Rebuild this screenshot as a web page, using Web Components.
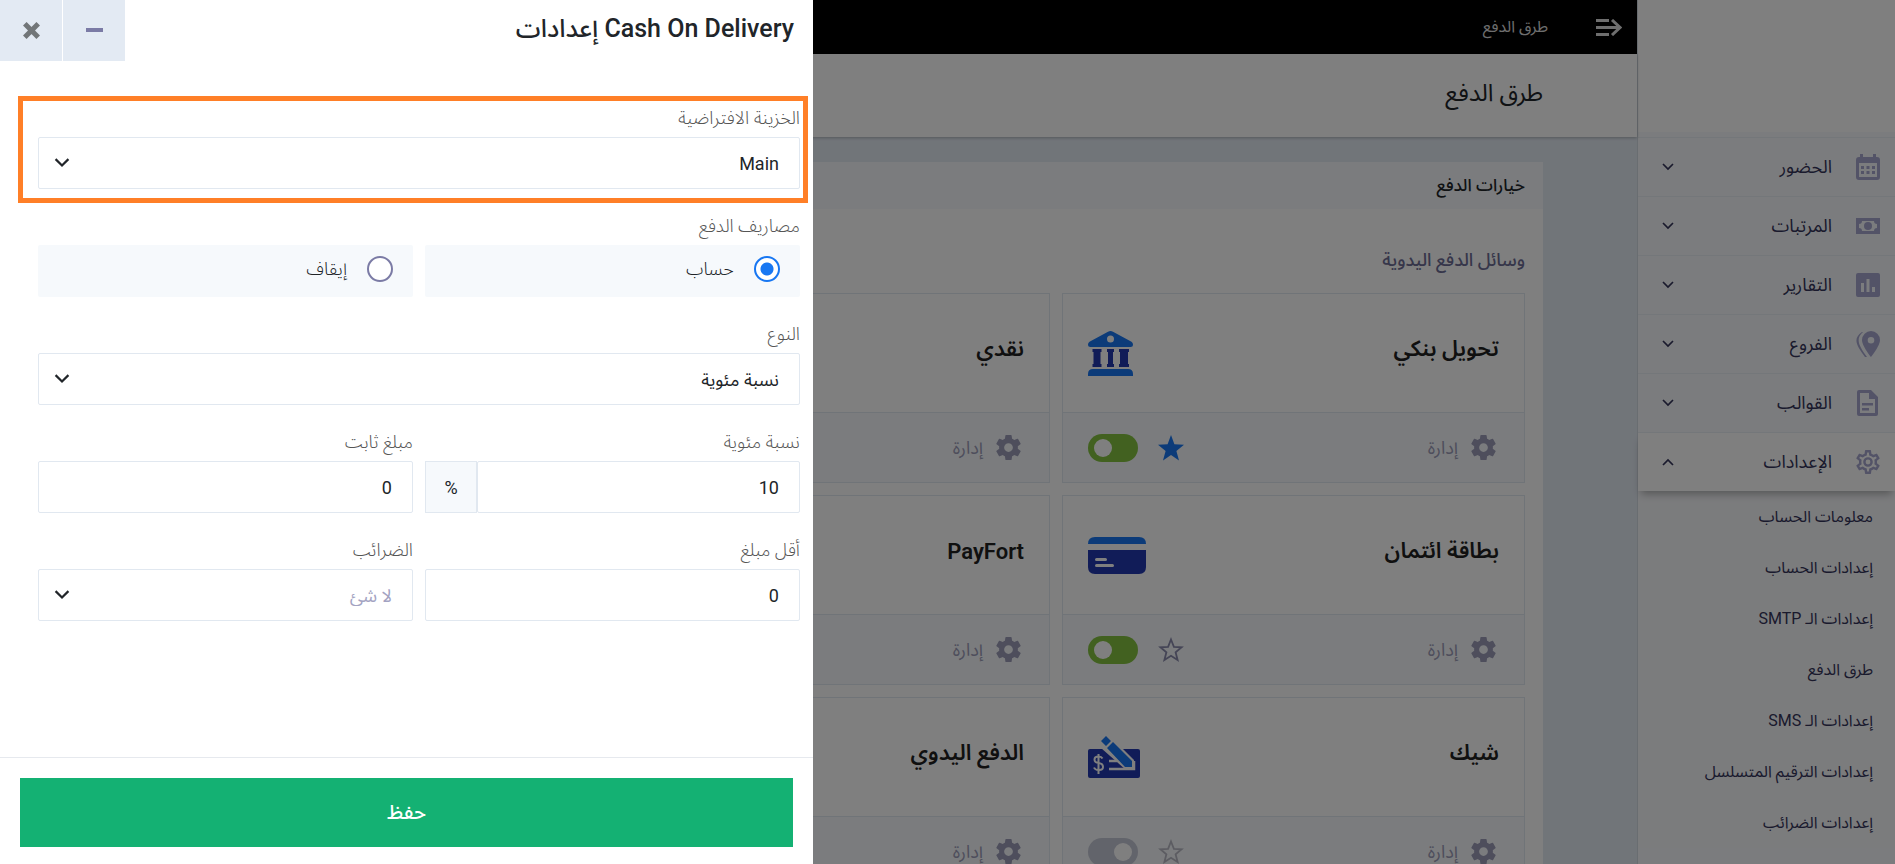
<!DOCTYPE html>
<html lang="ar" dir="rtl">
<head>
<meta charset="utf-8">
<meta name="viewport" content="width=device-width, initial-scale=1">
<title>طرق الدفع</title>
<style>
  html, body { margin: 0; height: 100%; }
  body {
    overflow: hidden;
    font-family: Roboto, "Noto Sans Arabic", "Noto Sans", "DejaVu Sans", sans-serif;
    font-size: 16px;
    color: #212529;
    background: #e3eaf3;
  }
</style>
</head>
<body>
<payment-app></payment-app>

<script>
const ICONS = {
  calendar: ['0 0 24 26', '<path fill-rule="evenodd" d="M4 0h3v3h10V0h3v3h1a3 3 0 0 1 3 3v17a3 3 0 0 1-3 3H3a3 3 0 0 1-3-3V6a3 3 0 0 1 3-3h1zM3 9v14h18V9zM5 12h3v3H5zm5.500 0h3v3h-3zm5.500 0h3v3h-3zM5 17h3v3H5zm5.500 0h3v3h-3zm5.500 0h3v3h-3z"/>'],
  money: ['0 0 24 24', '<path fill-rule="evenodd" d="M0 4h24v16H0zM6 7a3 3 0 0 1-3 3v4a3 3 0 0 1 3 3h12a3 3 0 0 1 3-3v-4a3 3 0 0 1-3-3z"/><circle cx="12" cy="12" r="4"/>'],
  chart: ['0 0 24 24', '<path fill-rule="evenodd" d="M2 0h20a2 2 0 0 1 2 2v20a2 2 0 0 1-2 2H2a2 2 0 0 1-2-2V2a2 2 0 0 1 2-2zM5 10v9h3v-9zm5.500-4v13h3V6zM16 14v5h3v-5z"/>'],
  pin: ['0 0 24 26', '<path fill-rule="evenodd" d="M15 0a9 9 0 0 1 9 9c0 6-9 17-9 17S6 15 6 9a9 9 0 0 1 9-9zm0 6a3.300 3.300 0 1 0 0 6.600A3.300 3.300 0 0 0 15 6z"/><path d="M6 1C-4 8 1 15 9 26h2C3 15-1 8 7 1z"/>'],
  doc: ['0 0 24 26', '<path fill-rule="evenodd" d="M3 0h12l7 7v17a2 2 0 0 1-2 2H3a2 2 0 0 1-2-2V2a2 2 0 0 1 2-2zm1 3v20h15V9h-6V3z"/><path d="M6 13h11v2.500H6zM6 18h7v2.500H6z"/>'],
  cog: ['2 2 20 20', '<path fill-rule="evenodd" d="M19.430 12.980c.04-.32.07-.64.07-.98s-.03-.66-.07-.98l2.110-1.650a.5.5 0 0 0 .12-.64l-2-3.460a.5.5 0 0 0-.61-.22l-2.490 1a7.300 7.300 0 0 0-1.690-.98l-.38-2.650A.5.5 0 0 0 14 2h-4a.5.5 0 0 0-.49.42l-.38 2.650c-.61.25-1.170.59-1.690.98l-2.490-1a.5.5 0 0 0-.61.22l-2 3.460a.5.5 0 0 0 .12.64l2.110 1.650c-.04.32-.07.65-.07.98s.03.66.07.98l-2.110 1.650a.5.5 0 0 0-.12.64l2 3.460c.12.22.39.3.61.22l2.490-1c.52.4 1.080.73 1.690.98l.38 2.650c.03.24.24.42.49.42h4c.25 0 .46-.18.49-.42l.38-2.650c.61-.25 1.170-.59 1.690-.98l2.490 1c.23.09.49 0 .61-.22l2-3.460a.5.5 0 0 0-.12-.64z M12 8.500a3.500 3.500 0 1 0 0 7a3.500 3.500 0 0 0 0-7z"/>'],
  cogOutline: ['2 2 20 20', '<path fill-rule="evenodd" d="M19.430 12.980c.04-.32.07-.64.07-.98s-.03-.66-.07-.98l2.110-1.650a.5.5 0 0 0 .12-.64l-2-3.460a.5.5 0 0 0-.61-.22l-2.490 1a7.300 7.300 0 0 0-1.690-.98l-.38-2.650A.5.5 0 0 0 14 2h-4a.5.5 0 0 0-.49.42l-.38 2.650c-.61.25-1.170.59-1.690.98l-2.490-1a.5.5 0 0 0-.61.22l-2 3.460a.5.5 0 0 0 .12.64l2.110 1.650c-.04.32-.07.65-.07.98s.03.66.07.98l-2.110 1.650a.5.5 0 0 0-.12.64l2 3.460c.12.22.39.3.61.22l2.490-1c.52.4 1.080.73 1.690.98l.38 2.650c.03.24.24.42.49.42h4c.25 0 .46-.18.49-.42l.38-2.650c.61-.25 1.170-.59 1.690-.98l2.490 1c.23.09.49 0 .61-.22l2-3.460a.5.5 0 0 0-.12-.64zM17.450 11.270c.04.31.05.52.05.73s-.02.43-.05.73l-.14 1.130.89.7 1.080.84-.7 1.210-1.270-.51-1.040-.42-.9.68c-.43.32-.84.56-1.250.73l-1.060.43-.16 1.130-.2 1.350h-1.400l-.35-2.480-1.060-.43c-.43-.18-.83-.41-1.230-.71l-.91-.7-1.060.43-1.270.51-.7-1.210 1.970-1.540-.14-1.130c-.03-.31-.05-.54-.05-.74s.02-.43.05-.73l.14-1.130-1.970-1.540.7-1.210 2.310.94.9-.68c.43-.32.84-.56 1.250-.73l1.060-.43.36-2.480h1.390l.35 2.480 1.060.43c.43.18.83.41 1.230.71l.91.7 2.330-.94.7 1.210-1.960 1.540z"/><circle cx="12" cy="12" r="3" fill="none" stroke="currentColor" stroke-width="2"/>'],
  menu: ['0 0 26 17', '<path d="M0 0h13v3H0zM0 7h22v3H0zM0 14h13v3H0z"/><path d="M16 1l8 7.500-8 7.500" fill="none" stroke="currentColor" stroke-width="3"/>'],
  down: ['0 0 14 14', '<path d="M2 4l5 5 5-5" fill="none" stroke="currentColor" stroke-width="1.700"/>'],
  up: ['0 0 14 14', '<path d="M2 10l5-5 5 5" fill="none" stroke="currentColor" stroke-width="1.700"/>'],
  star: ['0 0 26 26', '<path d="M13 0l3.400 9.300 9.600.4-7.600 6.200 2.600 9.600-8-5.500-8 5.500 2.600-9.600L0 9.700l9.600-.4z"/>'],
  starOutline: ['0 0 26 26', '<path d="M13 2.500l2.900 7.300 7.700.5-6 5 2 7.700-6.600-4.300L6.400 23l2-7.700-6-5 7.700-.5z" fill="none" stroke="currentColor" stroke-width="1.800"/>'],
  close: ['0 0 17 17', '<path d="M2.500 2.500l12 12M14.500 2.500l-12 12" fill="none" stroke="currentColor" stroke-width="4.500"/>'],
  minus: ['0 0 17 17', '<path d="M0 6h17v4H0z"/>'],
  bank: ['0 0 45 45', '<path fill="#1877f2" fill-rule="evenodd" d="M20 .8q2.500-1.500 5 0l18.500 10q1.500 1 1.500 2.700a2.500 2.500 0 0 1-2.500 2.500h-40A2.500 2.500 0 0 1 0 13.500q0-1.700 1.500-2.700zM22.500 4.500a3.500 3.500 0 1 0 0 7a3.500 3.500 0 0 0 0-7zM0 45v-2q0-5 5-5h35q5 0 5 5v2z"/><path fill="#2238b0" d="M4.500 18h9v3h-1v12h1v3h-9v-3h1V21h-1zM19 18h7v3h-1v12h1v3h-7v-3h1V21h-1zM31 18h10v3h-1v12h1v3H31v-3h1V21h-1z"/>'],
  card: ['0 0 58 37', '<path fill="#1877f2" d="M0 7q0-7 7-7h44q7 0 7 7z"/><path fill="#2238b0" d="M0 13h58v17q0 7-7 7H7q-7 0-7-7z"/><path stroke="#fff" stroke-width="3" stroke-linecap="round" d="M8.500 22.500h9M8.500 28.500h16"/>'],
  cheque: ['0 0 52 42', '<rect y="13" width="52" height="29" rx="2" fill="#2238b0"/><path d="M21 25h8M21 33h25v-8" fill="none" stroke="#fff" stroke-width="2.500"/><path d="M18 7l-5 5 25 22h8V24L26 4z" fill="#fff"/><path d="M18 0l5 5-5 5-5-5zM25 6l19 19v6h-7L19 12z" fill="#1877f2"/><path d="M14.500 22.500q-1-2-4-2-4 0-4 3t4 3.500q4.500.6 4.500 4t-4.500 3q-3.500 0-4.500-2.500M10.500 18v20" fill="none" stroke="#fff" stroke-width="2"/>'],
};

const icon = (name, w, h = w) => {
  const [box, body] = ICONS[name];
  return `<svg viewBox="${box}" width="${w}" height="${h}" fill="currentColor" aria-hidden="true">${body}</svg>`;
};

const BASE = `
  *, *::before, *::after { box-sizing: border-box; }
  svg { display: block; flex: none; }
  button, input, select { font: inherit; color: inherit; margin: 0; }
  button { padding: 0; border: 0; background: none; cursor: pointer; }
  a { color: inherit; text-decoration: none; }
  h1, h2, h3 { margin: 0; font-weight: 500; }
`;

class BaseElement extends HTMLElement {
  connectedCallback() {
    if (this.shadowRoot) return;
    this.attachShadow({ mode: 'open' });
    this.shadowRoot.innerHTML = `<style>${BASE}${this.css()}</style>${this.html()}`;
  }
  attr(name, fallback = '') {
    return this.getAttribute(name) ?? fallback;
  }
}

// ---------- sidebar ----------

class SideLink extends BaseElement {
  css() {
    return `
      :host { display: block; border-top: 1px solid #e9eef4; color: #34345a; }
      :host([open]) { position: relative; background: #fff; box-shadow: 0 6px 8px -3px rgba(0, 0, 0, .3); }
      a { display: flex; align-items: center; gap: 24px; height: 58px; padding: 0 15px 0 23px; font-size: 18px; }
      .icon { color: #a6a6cf; }
      .label { flex: 1; }
    `;
  }
  html() {
    return `<a href="#">
      <span class="icon">${icon(this.attr('icon'), 24, 26)}</span>
      <span class="label"><slot></slot></span>
      ${icon(this.hasAttribute('open') ? 'up' : 'down', 14)}
    </a>`;
  }
}

class SideBar extends BaseElement {
  css() {
    return `
      :host { display: flex; flex-direction: column; width: 258px; flex: none; background: #f7f9fc; border-left: 1px solid #d3dae3; }
      .logo { height: 132px; background: #fff; margin-bottom: 5px; flex: none; }
      .sub { display: flex; flex-direction: column; margin: 0; padding: 0; list-style: none; background: #f7f8fb; color: #34345a; font-size: 16px; }
      .sub a { display: flex; align-items: center; height: 51px; padding: 0 22px; white-space: nowrap; }
    `;
  }
  html() {
    const sub = ['معلومات الحساب', 'إعدادات الحساب', 'إعدادات الـ SMTP', 'طرق الدفع', 'إعدادات الـ SMS', 'إعدادات الترقيم المتسلسل', 'إعدادات الضرائب'];
    return `
      <div class="logo"></div>
      <side-link icon="calendar">الحضور</side-link>
      <side-link icon="money">المرتبات</side-link>
      <side-link icon="chart">التقارير</side-link>
      <side-link icon="pin">الفروع</side-link>
      <side-link icon="doc">القوالب</side-link>
      <side-link icon="cogOutline" open>الإعدادات</side-link>
      <ul class="sub">${sub.map(s => `<li><a href="#">${s}</a></li>`).join('')}</ul>
    `;
  }
}

// ---------- page ----------

class TopBar extends BaseElement {
  css() {
    return `
      :host { display: flex; align-items: center; gap: 48px; height: 54px; flex: none; padding: 0 15px; background: #000; color: #ddd; font-size: 16px; }
    `;
  }
  html() {
    return `<button aria-label="القائمة">${icon('menu', 26, 17)}</button><span><slot></slot></span>`;
  }
}

class PaymentCard extends BaseElement {
  css() {
    return `
      :host { display: block; border: 1px solid #e1e8f0; }
      .body { display: flex; align-items: center; justify-content: space-between; height: 118px; padding: 0 25px; }
      h3 { padding-bottom: 8px; font-size: 22px; font-weight: 600; color: #212121; }
      .foot { display: flex; align-items: center; gap: 20px; height: 70px; padding: 0 28px 0 25px; border-top: 1px solid #e1e8f0; background: #f6f9fc; }
      .manage { display: flex; align-items: center; gap: 13px; margin-inline-end: auto; color: #9c9cb8; font-size: 18px; }
      .star { color: #8a8aac; }
      .star.on { color: #1877f2; }
      .star.off { color: #b9b9c4; }
      input { appearance: none; width: 50px; height: 28px; padding: 5px 6px; border-radius: 14px; background: #c5c8d6; display: flex; align-items: center; }
      input::before { content: ""; width: 18px; height: 18px; border-radius: 9px; background: #fff; }
      input:checked { background: #84c341; justify-content: flex-end; }
    `;
  }
  html() {
    const star = this.attr('star', 'none');
    const art = this.attr('art');
    const size = { bank: [45, 45], card: [58, 37], cheque: [52, 42] }[art];
    return `
      <div class="body"><h3><slot></slot></h3>${size ? icon(art, ...size) : ''}</div>
      <div class="foot">
        <a class="manage" href="#">${icon('cog', 25)}<span>إدارة</span></a>
        <button class="star ${star}" aria-label="الافتراضي">${icon(star === 'on' ? 'star' : 'starOutline', 26)}</button>
        <input type="checkbox" aria-label="تفعيل" ${this.hasAttribute('active') ? 'checked' : ''}>
      </div>
    `;
  }
}

class PaymentPage extends BaseElement {
  css() {
    return `
      :host { display: flex; flex-direction: column; flex: 1; min-width: 0; }
      .head { display: flex; align-items: center; height: 83px; flex: none; padding: 0 94px 4px; background: #fff; box-shadow: 0 1px 3px rgba(0, 0, 0, .25); }
      h1 { font-size: 24px; font-weight: 400; }
      .panel { margin: 25px 94px 0; border-radius: 2px; background: #fff; }
      h2 { display: flex; align-items: center; height: 47px; padding: 0 18px; background: #f6f9fc; font-size: 17px; }
      .list { display: flex; flex-direction: column; gap: 12px; padding: 34px 18px; }
      .caption { height: 38px; line-height: 34px; font-size: 18px; font-weight: 500; color: #6c6c94; }
      .row { display: grid; grid-template-columns: repeat(3, 1fr); gap: 12px; }
    `;
  }
  html() {
    return `
      <top-bar>طرق الدفع</top-bar>
      <div class="head"><h1>طرق الدفع</h1></div>
      <section class="panel">
        <h2>خيارات الدفع</h2>
        <div class="list">
          <div class="caption">وسائل الدفع اليدوية</div>
          <div class="row">
            <payment-card art="bank" star="on" active>تحويل بنكي</payment-card>
            <payment-card active>نقدي</payment-card>
          </div>
          <div class="row">
            <payment-card art="card" active>بطاقة ائتمان</payment-card>
            <payment-card active>PayFort</payment-card>
          </div>
          <div class="row">
            <payment-card art="cheque" star="off">شيك</payment-card>
            <payment-card>الدفع اليدوي</payment-card>
          </div>
        </div>
      </section>
    `;
  }
}

// ---------- drawer ----------

const FIELD = `
  :host { display: block; min-width: 0; }
  label, legend { display: block; height: 38px; line-height: 38px; padding: 0; font-size: 18px; font-weight: 300; color: #555; }
  input:not([type=radio]), select { display: block; width: 100%; min-width: 0; height: 52px; padding: 0 20px; border: 1px solid #e1e8f0; border-radius: 2px; background: #fff; color: #212529; font-size: 18px; outline: 0; }
`;

class TextField extends BaseElement {
  css() {
    return `${FIELD}
      .group { display: flex; }
      .unit { display: flex; flex: none; align-items: center; justify-content: center; width: 52px; border: 1px solid #e1e8f0; background: #f6f9fc; font-size: 18px; }
    `;
  }
  html() {
    const unit = this.attr('unit');
    return `
      <label for="f">${this.attr('label')}</label>
      <div class="group"><input id="f" type="text" value="${this.attr('value')}">${unit ? `<span class="unit">${unit}</span>` : ''}</div>
    `;
  }
}

class SelectField extends BaseElement {
  css() {
    return `${FIELD}
      .box { display: grid; align-items: center; }
      .box > * { grid-area: 1 / 1; }
      select { appearance: none; }
      :host([muted]) select { color: #a3a3c2; }
      svg { justify-self: end; margin-inline-end: 15px; pointer-events: none; }
    `;
  }
  html() {
    return `
      <label for="f">${this.attr('label')}</label>
      <div class="box"><select id="f"><option>${this.attr('value')}</option></select>${icon('down', 18)}</div>
    `;
  }
}

class RadioField extends BaseElement {
  css() {
    return `${FIELD}
      fieldset { margin: 0; padding: 0; border: 0; min-width: 0; }
      .options { display: grid; grid-template-columns: 1fr 1fr; gap: 12px; }
      .options label { display: flex; align-items: center; gap: 20px; height: 52px; padding: 0 20px 4px; border-radius: 2px; background: #f6f9fc; color: #212529; font-size: 18px; }
      input { appearance: none; width: 26px; height: 26px; border: 2px solid #7b7ba5; border-radius: 50%; background: #fff; }
      input:checked { border-color: #1877f2; background: radial-gradient(circle, #1877f2 6px, #fff 7px); }
    `;
  }
  html() {
    const options = this.attr('options').split('|');
    return `
      <fieldset>
        <legend>${this.attr('label')}</legend>
        <div class="options">${options.map((o, i) => `<label><input type="radio" name="r" ${i === 0 ? 'checked' : ''}>${o}</label>`).join('')}</div>
      </fieldset>
    `;
  }
}

class SettingsDrawer extends BaseElement {
  css() {
    return `
      :host { display: flex; flex-direction: column; background: #fff; }
      header { display: flex; justify-content: space-between; height: 61px; flex: none; }
      h2 { padding: 0 19px; line-height: 58px; font-size: 25px; color: #212529; }
      .tools { display: flex; gap: 1px; }
      .tools button { display: flex; align-items: center; justify-content: center; width: 62px; background: #e3eaf3; color: #7b7ba5; }
      .tools .close { color: #727678; }
      form { flex: 1; display: grid; grid-template-columns: 1fr 1fr; align-content: start; gap: 18px 12px; padding: 38px 13px 0 38px; }
      .wide { grid-column: 1 / -1; }
      .marked { position: relative; }
      .marked::after { content: ""; position: absolute; inset: -3px -8px -14px -20px; border: 5px solid #ff7f27; pointer-events: none; }
      footer { padding: 20px 20px 17px; border-top: 1px solid #e6e9ee; }
      .save { display: block; width: 100%; height: 69px; background: #14b173; color: #fff; font-size: 20px; font-weight: 500; }
    `;
  }
  html() {
    return `
      <header>
        <h2>Cash On Delivery إعدادات</h2>
        <div class="tools">
          <button aria-label="تصغير">${icon('minus', 17)}</button>
          <button class="close" aria-label="إغلاق">${icon('close', 19)}</button>
        </div>
      </header>
      <form>
        <select-field class="wide marked" label="الخزينة الافتراضية" value="Main"></select-field>
        <radio-field class="wide" label="مصاريف الدفع" options="حساب|إيقاف"></radio-field>
        <select-field class="wide" label="النوع" value="نسبة مئوية"></select-field>
        <text-field label="نسبة مئوية" value="10" unit="%"></text-field>
        <text-field label="مبلغ ثابت" value="0"></text-field>
        <text-field label="أقل مبلغ" value="0"></text-field>
        <select-field muted label="الضرائب" value="لا شئ"></select-field>
      </form>
      <footer><button class="save">حفظ</button></footer>
    `;
  }
}

class PaymentApp extends BaseElement {
  css() {
    return `
      :host { display: flex; height: 100vh; overflow: hidden; }
      .backdrop { position: fixed; inset: 0; z-index: 5; background: rgba(0, 0, 0, .5); }
      settings-drawer { position: fixed; top: 0; bottom: 0; left: 0; z-index: 6; width: 42.9%; }
    `;
  }
  html() {
    return `
      <side-bar></side-bar>
      <payment-page></payment-page>
      <div class="backdrop"></div>
      <settings-drawer></settings-drawer>
    `;
  }
}

customElements.define('side-link', SideLink);
customElements.define('side-bar', SideBar);
customElements.define('top-bar', TopBar);
customElements.define('payment-card', PaymentCard);
customElements.define('payment-page', PaymentPage);
customElements.define('text-field', TextField);
customElements.define('select-field', SelectField);
customElements.define('radio-field', RadioField);
customElements.define('settings-drawer', SettingsDrawer);
customElements.define('payment-app', PaymentApp);
</script>
</body>
</html>
